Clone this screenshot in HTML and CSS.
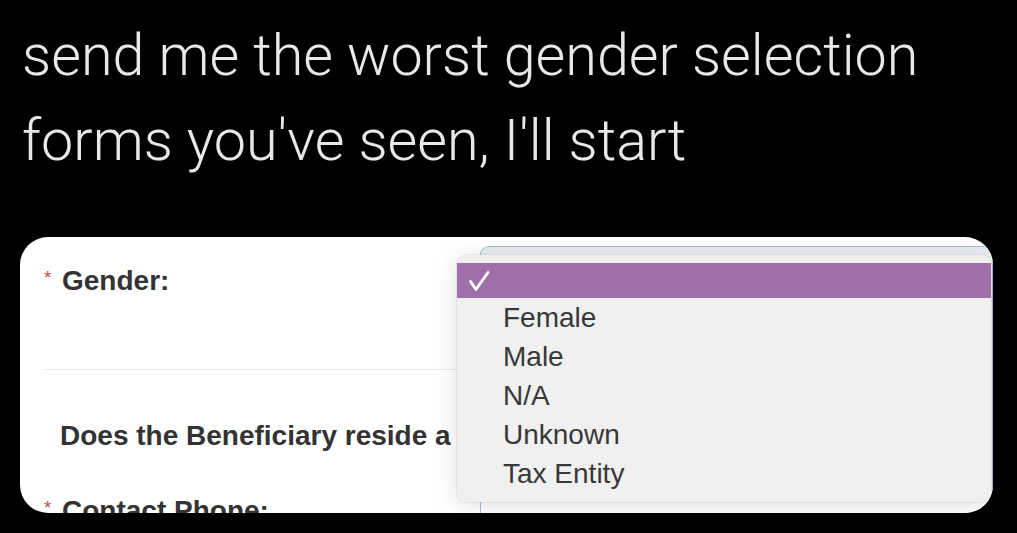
FILE: index.html
```html
<!DOCTYPE html>
<html lang="en">
<head>
<meta charset="utf-8">
<title>Gender selection</title>
<link rel="stylesheet" href="styles.css">
</head>
<body>
<div class="page">
  <h1 class="tweet">send me the worst gender selection<br>forms you've seen, I'll start</h1>
  <div class="card">
    <div class="form">
      <div class="row row-gender">
        <span class="req">*</span><span class="label">Gender:</span>
      </div>
      <div class="divider"></div>
      <div class="row row-reside">
        <span class="label">Does the Beneficiary reside a</span>
      </div>
      <div class="row row-phone">
        <span class="req">*</span><span class="label">Contact Phone:</span>
      </div>
    </div>
    <div class="select-box"></div>
    <div class="menu">
      <div class="opt opt-selected">
        <svg class="check" width="22" height="22" viewBox="0 0 22 22"><path d="M2.5 11.5 L8 19.5 L20 2.5" fill="none" stroke="#fff" stroke-width="2.8" stroke-linecap="round" stroke-linejoin="round"/></svg>
      </div>
      <div class="opt">Female</div>
      <div class="opt">Male</div>
      <div class="opt">N/A</div>
      <div class="opt">Unknown</div>
      <div class="opt">Tax Entity</div>
    </div>
  </div>
</div>
</body>
</html>
```
FILE: styles.css
```css
html, body {
  margin: 0;
  padding: 0;
  background: #000;
}
.page {
  width: 1017px;
  height: 533px;
  overflow: hidden;
  display: flex;
  flex-direction: column;
}
.tweet {
  margin: 0;
  padding: 13px 22px 0 22px;
  height: 222px;
  box-sizing: border-box;
  font-family: Roboto, "Liberation Sans", sans-serif;
  font-weight: 300;
  font-size: 57.5px;
  line-height: 85px;
  color: #e8e8e8;
  letter-spacing: 0;
}
.card {
  position: relative;
  margin: 15px 24px 0 20px;
  height: 276px;
  background: #fff;
  border-radius: 28px;
  overflow: hidden;
}
.form {
  padding: 28px 0 0 24px;
  display: flex;
  flex-direction: column;
  font-family: "Liberation Sans", Arial, sans-serif;
  font-weight: 700;
  font-size: 28px;
  line-height: 32px;
  color: #333;
}
.row {
  display: flex;
  align-items: flex-start;
  white-space: nowrap;
}
.req {
  width: 18px;
  font-size: 19px;
  line-height: 19px;
  color: #b9524c;
  font-weight: 400;
  margin-top: 3px;
}
.row-gender {
  height: 104px;
}
.divider {
  height: 1px;
  width: 440px;
  background: #e9e9e9;
}
.row-reside {
  margin-top: 50px;
  padding-left: 16px;
}
.row-phone {
  margin-top: 43px;
}
.select-box {
  position: absolute;
  left: 460px;
  top: 9px;
  right: 0;
  bottom: 0;
  border: 1px solid #aebdcb;
  border-bottom: none;
  border-radius: 9px 9px 0 0;
  background: linear-gradient(#e4ecf3, #f7f9fb 20px, #fff);
}
.menu {
  position: absolute;
  left: 437px;
  top: 18px;
  right: 2px;
  bottom: 11px;
  padding: 8px 0;
  box-sizing: border-box;
  background: #f0f0f0;
  border-radius: 9px;
  box-shadow: 0 3px 24px rgba(0, 0, 0, 0.13), 0 0 0 1px rgba(0, 0, 0, 0.05);
  font-family: "Liberation Sans", Arial, sans-serif;
  font-size: 28px;
  color: #383838;
}
.opt {
  height: 39px;
  line-height: 39px;
  padding-left: 46px;
}
.opt-selected {
  height: 35px;
  padding-left: 0;
  display: flex;
  align-items: center;
  background: #9e6fa8;
}
.check {
  margin-left: 11px;
}
```
